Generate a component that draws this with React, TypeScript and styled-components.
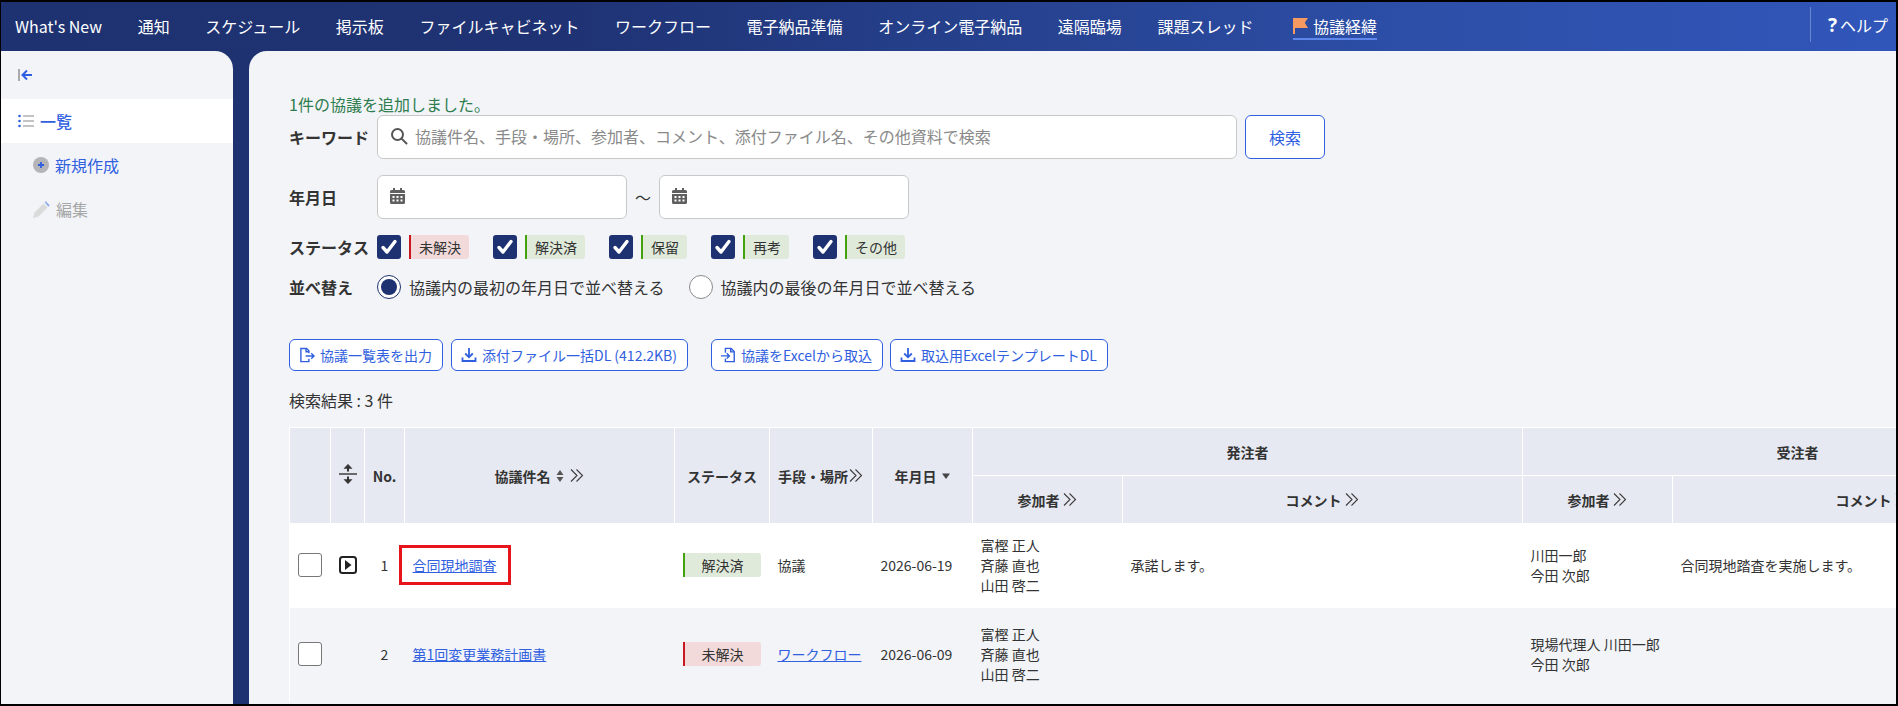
import React from "react";
import styled, { createGlobalStyle } from "styled-components";

const Global = createGlobalStyle`
  html, body { margin: 0; padding: 0; background: #000; height: 706px; overflow: hidden; }
  body { font-family: "Noto Sans CJK JP", "Noto Sans", sans-serif; color: #333; font-size: 14px; }
  * { box-sizing: border-box; }
`;

const BLUE = "#3060e0";
const NAVY = "#1e3170";

const Frame = styled.div`
  margin: 2px 2px 2px 1px;
  height: 702px;
  width: 1895px;
  display: flex;
  flex-direction: column;
  overflow: hidden;
  background: ${NAVY};
`;
const TopBar = styled.header`
  height: 49px;
  flex: none;
  display: flex;
  align-items: center;
  padding: 0 8px 0 14px;
  background: linear-gradient(90deg, #1e3170 0%, #1f3374 30%, #2d4fa8 75%, #3156ba 100%);
`;
const NavList = styled.nav`
  display: flex;
  align-items: center;
  gap: 35.6px;
  flex: 1;
  height: 100%;
`;
const NavItem = styled.a<{ $active?: boolean }>`
  color: #fff;
  font-size: 16px;
  line-height: 24px;
  white-space: nowrap;
  display: flex;
  align-items: center;
  gap: 5px;
  position: relative;
  padding-bottom: 2px;
  ${(p) => p.$active && `margin-left: 4px; border-bottom: 2px solid #5f86ea; margin-top: 0; padding-bottom: 0; height: 26px;`}
`;
const HelpLink = styled.a`
  height: 35px;
  border-left: 1px solid #6a86d0;
  padding-left: 17px;
  display: flex;
  align-items: center;
  gap: 3px;
  color: #fff;
  font-size: 16px;
  white-space: nowrap;
  margin-bottom: 4px;
`;
const HelpMark = styled.b`
  font-size: 19px;
  font-weight: 700;
  font-family: "Noto Sans", sans-serif;
`;
const Body = styled.div`
  flex: 1;
  display: flex;
  gap: 16px;
  min-height: 0;
`;
const Sidebar = styled.aside`
  width: 232px;
  flex: none;
  background: #f2f4f8;
  border-top-right-radius: 18px;
  padding-top: 17px;
`;
const Collapse = styled.div`
  height: 31px;
  padding-left: 17px;
  display: flex;
  align-items: flex-start;
`;
const SideItem = styled.a<{ $active?: boolean; $disabled?: boolean }>`
  height: 44px;
  display: flex;
  align-items: center;
  gap: 6px;
  padding-left: ${(p) => (p.$active ? "17px" : "32px")};
  background: ${(p) => (p.$active ? "#fff" : "transparent")};
  color: ${(p) => (p.$disabled ? "#a6a6a6" : BLUE)};
  font-size: 16px;
  font-weight: ${(p) => (p.$active ? 500 : 400)};
`;
const Main = styled.main`
  flex: 1;
  min-width: 0;
  background: #f2f4f8;
  border-top-left-radius: 18px;
  padding: 43px 0 0 40px;
  overflow: hidden;
`;
const Notice = styled.div`
  color: #2e7d4f;
  font-size: 16px;
  line-height: 21px;
`;
const Row = styled.div`
  display: flex;
  align-items: center;
`;
const SearchRow = styled(Row)`
  margin-bottom: 16px;
  height: 44px;
`;
const FieldLabel = styled.label`
  width: 88px;
  flex: none;
  font-size: 16px;
  font-weight: 700;
  color: #333;
  white-space: nowrap;
`;
const InputBox = styled.div<{ $w: number }>`
  width: ${(p) => p.$w}px;
  height: 44px;
  background: #fff;
  border: 1px solid #c8c8c8;
  border-radius: 6px;
  display: flex;
  align-items: center;
  padding: 0 0 2px 12px;
  gap: 7px;
  color: #8a8a8a;
  font-size: 16px;
`;
const SearchButton = styled.button`
  width: 80px;
  height: 44px;
  margin-left: 8px;
  background: #fff;
  border: 1px solid ${BLUE};
  border-radius: 6px;
  color: ${BLUE};
  font: inherit;
  font-size: 16px;
`;
const Tilde = styled.span`
  width: 32px;
  text-align: center;
  font-size: 16px;
`;
const StatusRow = styled(Row)`
  height: 24px;
  margin-bottom: 16px;
`;
const Check = styled.span`
  width: 24px;
  height: 24px;
  border-radius: 3px;
  background: ${NAVY};
  display: flex;
  align-items: center;
  justify-content: center;
  margin-right: 8px;
  flex: none;
`;
const StatusTag = styled.span<{ $red?: boolean }>`
  height: 24px;
  display: inline-flex;
  align-items: center;
  justify-content: center;
  padding: 0 8px;
  font-size: 14px;
  color: #333;
  border-left: 2px solid ${(p) => (p.$red ? "#c8171e" : "#43a20e")};
  background: ${(p) => (p.$red ? "#f2dada" : "#e0eadb")};
  border-radius: 0 3px 3px 0;
  margin-right: 24px;
  white-space: nowrap;
`;
const RadioMark = styled.span<{ $on?: boolean }>`
  width: 24px;
  height: 24px;
  border-radius: 50%;
  background: #fff;
  border: 1px solid ${(p) => (p.$on ? NAVY : "#8a8a8a")};
  display: flex;
  align-items: center;
  justify-content: center;
  flex: none;
  margin-right: 8px;
  &::after {
    content: "";
    display: ${(p) => (p.$on ? "block" : "none")};
    width: 16px;
    height: 16px;
    border-radius: 50%;
    background: ${NAVY};
  }
`;
const RadioText = styled.span`
  font-size: 16px;
  margin-right: 24px;
  white-space: nowrap;
`;
const Actions = styled(Row)`
  margin-top: 40px;
  height: 32px;
`;
const ActionButton = styled.button<{ $gapAfter?: number }>`
  height: 32px;
  padding: 0 10px 0 9px;
  display: flex;
  align-items: center;
  gap: 5px;
  background: #fff;
  border: 1px solid ${BLUE};
  border-radius: 6px;
  color: ${BLUE};
  font: inherit;
  font-size: 14px;
  white-space: nowrap;
  margin-right: ${(p) => p.$gapAfter ?? 8}px;
`;
const ResultCount = styled.div`
  font-size: 16px;
  line-height: 22px;
  margin: 18px 0 16px;
`;
const Table = styled.table`
  border-collapse: collapse;
  table-layout: fixed;
  width: 1783px;
  border-left: 1px solid #fff;
`;
const Th = styled.th<{ $h?: number }>`
  background: #e6e9f2;
  border: 1px solid #fff;
  font-size: 14px;
  font-weight: 700;
  color: #333;
  text-align: center;
  padding: 0;
  height: ${(p) => p.$h ?? 48}px;
  white-space: nowrap;
`;
const HeadInner = styled.span<{ $gap?: number }>`
  display: inline-flex;
  align-items: center;
  gap: ${(p) => p.$gap ?? 2}px;
  svg { flex: none; }
`;
const Tr = styled.tr<{ $white?: boolean; $h: number }>`
  background: ${(p) => (p.$white ? "#fff" : "#f2f4f8")};
  height: ${(p) => p.$h}px;
`;
const Td = styled.td<{ $center?: boolean }>`
  padding: 0 8px 1px;
  font-size: 14px;
  line-height: 20px;
  color: #333;
  text-align: ${(p) => (p.$center ? "center" : "left")};
  vertical-align: middle;
  white-space: nowrap;
`;
const ToggleCell = styled(Td)`
  padding: 0 0 1px;
`;
const CellCheck = styled.span`
  display: block;
  width: 24px;
  height: 24px;
  border: 1px solid #777;
  border-radius: 3px;
  background: #fff;
`;
const RowLink = styled.a`
  color: ${BLUE};
  text-decoration: underline;
`;
const Highlight = styled.span`
  position: relative;
  display: inline-block;
  &::after {
    content: "";
    position: absolute;
    left: -14px;
    right: -14px;
    top: -10px;
    bottom: -10px;
    border: 3px solid #e8141c;
  }
`;
const CellTag = styled(StatusTag)`
  width: 78px;
  margin: 0;
  display: flex;
`;
const ToggleSvg = styled.svg`
  display: block;
  margin: 0 auto;
`;

const Chevrons = () => (
  <svg width="16" height="15" viewBox="0 0 16 15" fill="none" stroke="#3c3c3c" strokeWidth="1.1">
    <path d="M2 1.500l6 6-6 6M7.500 1.500l6 6-6 6" />
  </svg>
);
const SortBoth = () => (
  <svg width="8" height="14" viewBox="0 0 8 14" fill="#555">
    <path d="M4 1l3.500 5h-7zM4 13L.5 8h7z" />
  </svg>
);
const SortDown = () => (
  <svg width="10" height="8" viewBox="0 0 10 8" fill="#444">
    <path d="M1 1.500h8L5 7z" />
  </svg>
);
const CheckMark = () => (
  <svg width="18" height="18" viewBox="0 0 18 18" fill="none" stroke="#fff" strokeWidth="3.4" strokeLinecap="round" strokeLinejoin="round">
    <path d="M3 9.500l4 4.500L15 3.500" />
  </svg>
);
const SearchIcon = () => (
  <svg width="18" height="18" viewBox="0 0 18 18" fill="none" stroke="#555" strokeWidth="2">
    <circle cx="7.500" cy="7.500" r="5.500" />
    <path d="M11.600 11.600L16.500 16.500" strokeLinecap="round" />
  </svg>
);
const CalendarIcon = () => (
  <svg width="15" height="16" viewBox="0 0 15 16" fill="#5f5f5f">
    <path d="M3 0h2v2h5V0h2v2h1.500A1.500 1.500 0 0 1 15 3.500V5H0V3.500A1.500 1.500 0 0 1 1.500 2H3z" />
    <path fillRule="evenodd" d="M0 6h15v8.500a1.500 1.500 0 0 1-1.500 1.500h-12A1.500 1.500 0 0 1 0 14.500zM2.500 8v2h2V8zm4 0v2h2V8zm4 0v2h2V8zm-8 3.500v2h2v-2zm4 0v2h2v-2zm4 0v2h2v-2z" />
  </svg>
);
const CollapseIcon = () => (
  <svg width="15" height="14" viewBox="0 0 15 14" fill="none">
    <path d="M1 1v12" stroke="#aaa" strokeWidth="2" />
    <path d="M14 7H5M9 2.500L4.500 7 9 11.500" stroke={BLUE} strokeWidth="2" />
  </svg>
);
const ListIcon = () => (
  <svg width="16" height="14" viewBox="0 0 16 14">
    <path d="M5 2h11M5 7h11M5 12h11" stroke="#b0b0b0" strokeWidth="1.600" />
    <g fill={BLUE}>
      <circle cx="1.500" cy="2" r="1.300" />
      <circle cx="1.500" cy="7" r="1.300" />
      <circle cx="1.500" cy="12" r="1.300" />
    </g>
  </svg>
);
const PlusCircle = () => (
  <svg width="16" height="16" viewBox="0 0 16 16">
    <circle cx="8" cy="8" r="8" fill="#b5b5b8" />
    <path d="M8 5v6M5 8h6" stroke={BLUE} strokeWidth="1.800" />
  </svg>
);
const PencilIcon = () => (
  <svg width="17" height="17" viewBox="0 0 17 17">
    <path d="M0 17l1.500-5.500L10.500 2.500l4 4L5.500 15.500z" fill="#dadada" />
    <path d="M11.700 1.300l1-1 4 4-1.400 1.400z" fill="#8fa8ec" />
  </svg>
);
const ExportIcon = () => (
  <svg width="16" height="17" viewBox="0 0 17 17" fill="none" stroke={BLUE} strokeWidth="1.500">
    <path d="M10.500 6V3.500L8 1H2v14h8.500v-3" />
    <path d="M7.500 1v3.500h3" />
    <path d="M7 9h9M13 6l3 3-3 3" />
  </svg>
);
const DownloadIcon = () => (
  <svg width="16" height="16" viewBox="0 0 16 16" fill="none" stroke={BLUE} strokeWidth="1.800">
    <path d="M8 1v9M4.200 6.500L8 10.300l3.800-3.800" />
    <path d="M1.500 10.500v3.500h13v-3.500" />
  </svg>
);
const ImportIcon = () => (
  <svg width="15" height="16" viewBox="0 0 17 17" fill="none" stroke={BLUE} strokeWidth="1.600">
    <path d="M5 6V1h6.500L15 4.500V16H5v-3.500" />
    <path d="M11 1v4h4" />
    <path d="M0 9.500h9M6.500 6.500l3 3-3 3" />
  </svg>
);
const ExpandAll = () => (
  <svg width="20" height="22" viewBox="0 0 20 22" fill="none" stroke="#333">
    <path d="M1 11h18" strokeWidth="1.400" />
    <path d="M10 8.500V3" strokeWidth="2" />
    <path d="M6 5.500L10 1.200 14 5.500z" fill="#333" strokeWidth="0.500" />
    <path d="M10 13.500V19" strokeWidth="2" />
    <path d="M6 16.500L10 20.800 14 16.500z" fill="#333" strokeWidth="0.500" />
  </svg>
);
const RowToggle = () => (
  <ToggleSvg width="18" height="18" viewBox="0 0 18 18">
    <rect x="1" y="1" width="16" height="16" rx="2.500" fill="#fff" stroke="#222" strokeWidth="2" />
    <path d="M6 4l6.500 5L6 14z" fill="#222" />
  </ToggleSvg>
);
const FlagIcon = () => (
  <svg width="15" height="16" viewBox="0 0 15 16" fill="#f79a62">
    <path d="M0 0h15l-3.200 4.800L15 10H2v6H0z" />
  </svg>
);

const names = ["富樫 正人", "斉藤 直也", "山田 啓二"];
const Lines = ({ items }: { items: string[] }) => (
  <>
    {items.map((n) => (
      <div key={n}>{n}</div>
    ))}
  </>
);

const navItems = ["What's New", "通知", "スケジュール", "掲示板", "ファイルキャビネット", "ワークフロー", "電子納品準備", "オンライン電子納品", "遠隔臨場", "課題スレッド"];
const widths = [41, 34, 40, 270, 95, 103, 100, 150, 400, 150, 400, 1];

export default function App() {
  return (
    <>
      <Global />
      <Frame>
        <TopBar>
          <NavList>
            {navItems.map((n) => (
              <NavItem key={n}>{n}</NavItem>
            ))}
            <NavItem $active>
              <FlagIcon />
              協議経緯
            </NavItem>
          </NavList>
          <HelpLink>
            <HelpMark>?</HelpMark>ヘルプ
          </HelpLink>
        </TopBar>
        <Body>
          <Sidebar>
            <Collapse>
              <CollapseIcon />
            </Collapse>
            <SideItem $active>
              <ListIcon />
              一覧
            </SideItem>
            <SideItem>
              <PlusCircle />
              新規作成
            </SideItem>
            <SideItem $disabled>
              <PencilIcon />
              編集
            </SideItem>
          </Sidebar>
          <Main>
            <Notice>1件の協議を追加しました。</Notice>
            <SearchRow>
              <FieldLabel>キーワード</FieldLabel>
              <InputBox $w={860}>
                <SearchIcon />
                協議件名、手段・場所、参加者、コメント、添付ファイル名、その他資料で検索
              </InputBox>
              <SearchButton>検索</SearchButton>
            </SearchRow>
            <SearchRow>
              <FieldLabel>年月日</FieldLabel>
              <InputBox $w={250}>
                <CalendarIcon />
              </InputBox>
              <Tilde>～</Tilde>
              <InputBox $w={250}>
                <CalendarIcon />
              </InputBox>
            </SearchRow>
            <StatusRow>
              <FieldLabel>ステータス</FieldLabel>
              <Check><CheckMark /></Check>
              <StatusTag $red>未解決</StatusTag>
              <Check><CheckMark /></Check>
              <StatusTag>解決済</StatusTag>
              <Check><CheckMark /></Check>
              <StatusTag>保留</StatusTag>
              <Check><CheckMark /></Check>
              <StatusTag>再考</StatusTag>
              <Check><CheckMark /></Check>
              <StatusTag>その他</StatusTag>
            </StatusRow>
            <StatusRow>
              <FieldLabel>並べ替え</FieldLabel>
              <RadioMark $on />
              <RadioText>協議内の最初の年月日で並べ替える</RadioText>
              <RadioMark />
              <RadioText>協議内の最後の年月日で並べ替える</RadioText>
            </StatusRow>
            <Actions>
              <ActionButton><ExportIcon />協議一覧表を出力</ActionButton>
              <ActionButton $gapAfter={23}><DownloadIcon />添付ファイル一括DL (412.2KB)</ActionButton>
              <ActionButton $gapAfter={7}><ImportIcon />協議をExcelから取込</ActionButton>
              <ActionButton><DownloadIcon />取込用ExcelテンプレートDL</ActionButton>
            </Actions>
            <ResultCount>検索結果 : 3 件</ResultCount>
            <Table>
              <colgroup>
                {widths.map((w, i) => (
                  <col key={i} style={{ width: w }} />
                ))}
              </colgroup>
              <thead>
                <tr>
                  <Th rowSpan={2} />
                  <Th rowSpan={2}><HeadInner><ExpandAll /></HeadInner></Th>
                  <Th rowSpan={2}>No.</Th>
                  <Th rowSpan={2}><HeadInner $gap={5}>協議件名<SortBoth /><Chevrons /></HeadInner></Th>
                  <Th rowSpan={2}>ステータス</Th>
                  <Th rowSpan={2}><HeadInner $gap={0}>手段・場所<Chevrons /></HeadInner></Th>
                  <Th rowSpan={2}><HeadInner $gap={4}>年月日<SortDown /></HeadInner></Th>
                  <Th colSpan={2}>発注者</Th>
                  <Th colSpan={2}>受注者</Th>
                  <Th rowSpan={2} />
                </tr>
                <tr>
                  <Th $h={48}><HeadInner>参加者<Chevrons /></HeadInner></Th>
                  <Th $h={48}><HeadInner>コメント<Chevrons /></HeadInner></Th>
                  <Th $h={48}><HeadInner>参加者<Chevrons /></HeadInner></Th>
                  <Th $h={48}><HeadInner>コメント<Chevrons /></HeadInner></Th>
                </tr>
              </thead>
              <tbody>
                <Tr $white $h={84}>
                  <Td><CellCheck /></Td>
                  <ToggleCell $center><RowToggle /></ToggleCell>
                  <Td $center>1</Td>
                  <Td><Highlight><RowLink>合同現地調査</RowLink></Highlight></Td>
                  <Td><CellTag>解決済</CellTag></Td>
                  <Td>協議</Td>
                  <Td>2026-06-19</Td>
                  <Td><Lines items={names} /></Td>
                  <Td>承諾します。</Td>
                  <Td><Lines items={["川田一郎", "今田 次郎"]} /></Td>
                  <Td>合同現地踏査を実施します。</Td>
                  <Td />
                </Tr>
                <Tr $h={94}>
                  <Td><CellCheck /></Td>
                  <Td />
                  <Td $center>2</Td>
                  <Td><RowLink>第1回変更業務計画書</RowLink></Td>
                  <Td><CellTag $red>未解決</CellTag></Td>
                  <Td><RowLink>ワークフロー</RowLink></Td>
                  <Td>2026-06-09</Td>
                  <Td><Lines items={names} /></Td>
                  <Td />
                  <Td><Lines items={["現場代理人 川田一郎", "今田 次郎"]} /></Td>
                  <Td />
                  <Td />
                </Tr>
              </tbody>
            </Table>
          </Main>
        </Body>
      </Frame>
    </>
  );
}
